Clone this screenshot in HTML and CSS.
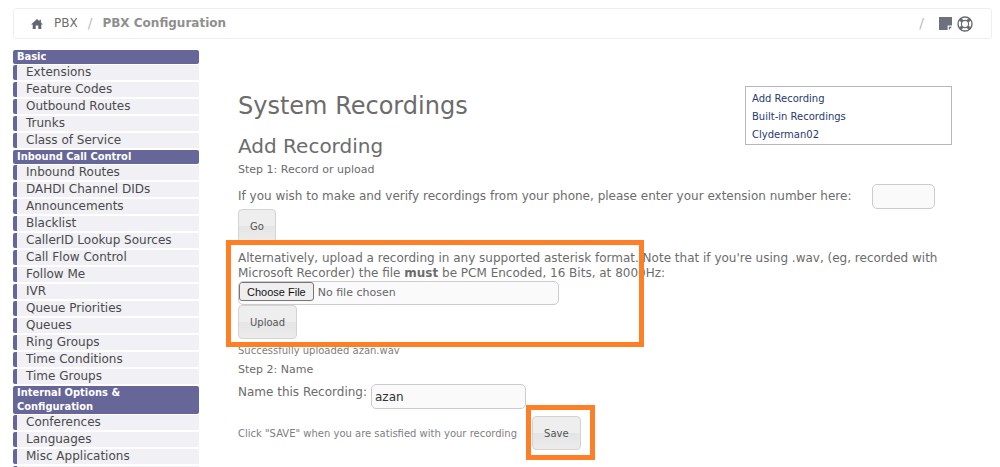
FILE: index.html
```html
<!DOCTYPE html>
<html lang="en">

<head>
    <meta charset="UTF-8">
    <meta name="viewport" content="width=device-width, initial-scale=1.0">
    <title>PBX Configuration</title>
    <link rel="stylesheet" href="styles.css">
</head>

<body>
    <!-- Breadcrumb -->
    <header class="topbar">
        <a class="home" href="#" aria-label="Home">
            <svg width="12" height="10" viewBox="0 0 12 10" fill="#63666f">
                <path d="M6 0 0 5.4h1.7V10h3V6.6h2.6V10h3V5.4H12L9.9 3.5V.8H8.5v1.4z" />
            </svg>
        </a>
        <a href="#">PBX</a>
        <span class="slash">/</span>
        <strong>PBX Configuration</strong>
        <div class="tools">
            <span class="slash">/</span>
            <button type="button" aria-label="Notes">
                <svg width="13" height="13" viewBox="0 0 13 13" fill="#6d717d">
                    <path d="M0 0h13v8.5H8.6V13H0z" />
                    <path d="M9.8 9.8H13L9.8 13z" />
                </svg>
            </button>
            <button type="button" aria-label="Help">
                <svg width="16" height="16" viewBox="0 0 16 16" fill="none" stroke="#686b73">
                    <circle cx="8" cy="8" r="7" stroke-width="1.4" />
                    <circle cx="8" cy="8" r="3.6" stroke-width="1.2" />
                    <path d="m3 3 2.4 2.4M13 3l-2.4 2.4M3 13l2.4-2.4M13 13l-2.4-2.4" stroke-width="3" />
                </svg>
            </button>
        </div>
    </header>

    <div class="columns">
        <!-- Module menu -->
        <nav class="sidebar">
            <h3>Basic</h3>
            <ul>
                <li><a href="#">Extensions</a></li>
                <li><a href="#">Feature Codes</a></li>
                <li><a href="#">Outbound Routes</a></li>
                <li><a href="#">Trunks</a></li>
                <li><a href="#">Class of Service</a></li>
            </ul>
            <h3>Inbound Call Control</h3>
            <ul>
                <li><a href="#">Inbound Routes</a></li>
                <li><a href="#">DAHDI Channel DIDs</a></li>
                <li><a href="#">Announcements</a></li>
                <li><a href="#">Blacklist</a></li>
                <li><a href="#">CallerID Lookup Sources</a></li>
                <li><a href="#">Call Flow Control</a></li>
                <li><a href="#">Follow Me</a></li>
                <li><a href="#">IVR</a></li>
                <li><a href="#">Queue Priorities</a></li>
                <li><a href="#">Queues</a></li>
                <li><a href="#">Ring Groups</a></li>
                <li><a href="#">Time Conditions</a></li>
                <li><a href="#">Time Groups</a></li>
            </ul>
            <h3>Internal Options &amp;<br>Configuration</h3>
            <ul>
                <li><a href="#">Conferences</a></li>
                <li><a href="#">Languages</a></li>
                <li><a href="#">Misc Applications</a></li>
                <li></li>
            </ul>
        </nav>

        <main class="content">
            <div class="heading">
                <div>
                    <h1>System Recordings</h1>
                    <h2>Add Recording</h2>
                </div>
                <ul class="rnav">
                    <li><a href="#">Add Recording</a></li>
                    <li><a href="#">Built-in Recordings</a></li>
                    <li><a href="#">Clyderman02</a></li>
                </ul>
            </div>

            <form>
                <h5>Step 1: Record or upload</h5>
                <div class="phone">
                    <label for="extension">If you wish to make and verify recordings from your phone, please enter your extension number here:</label>
                    <input type="text" id="extension">
                </div>
                <button type="button" class="btn">Go</button>

                <div class="upload">
                    <label for="recording">Alternatively, upload a recording in any supported asterisk format. Note that if you're using .wav, (eg, recorded with Microsoft Recorder) the file <b>must</b> be PCM Encoded, 16 Bits, at 8000Hz:</label>
                    <input type="file" id="recording">
                    <button type="button" class="btn">Upload</button>
                    <span class="marker"></span>
                </div>

                <p class="status">Successfully uploaded azan.wav</p>
                <h5>Step 2: Name</h5>
                <div class="name">
                    <label for="rname">Name this Recording:</label>
                    <input type="text" id="rname" value="azan">
                </div>
                <div class="save">
                    <p>Click "SAVE" when you are satisfied with your recording</p>
                    <div class="save-button">
                        <button type="button" class="btn">Save</button>
                        <span class="marker"></span>
                    </div>
                </div>
            </form>
        </main>
    </div>
</body>

</html>
```
FILE: styles.css
```css
* {
    box-sizing: border-box;
}

body {
    margin: 0;
    padding: 8px 8px 0 13px;
    height: 100vh;
    overflow: hidden;
    background-color: #fff;
    font-family: Verdana, "DejaVu Sans", sans-serif;
    font-size: 12px;
    line-height: 15px;
    color: #6c6c6c;
}

a {
    color: inherit;
    text-decoration: none;
}

ul {
    list-style: none;
    margin: 0;
    padding: 0;
}

h1,
h2,
h3,
h5,
p {
    margin: 0;
    font-weight: normal;
}

svg {
    display: block;
}

/* Breadcrumb */
.topbar {
    display: flex;
    align-items: center;
    height: 31px;
    padding: 0 18px 0 17px;
    border: 1px solid #eee;
    border-radius: 3px;
}

.topbar strong {
    color: #8f8f8f;
}

.home {
    margin-right: 11px;
}

.slash {
    margin: 0 10px;
    font-size: 14px;
    color: #bbb;
}

.tools {
    display: flex;
    align-items: center;
    gap: 5px;
    margin-left: auto;
}

.tools button {
    padding: 0;
    border: 0;
    background: none;
    cursor: pointer;
}

.columns {
    display: flex;
    gap: 39px;
    margin-top: 11px;
}

/* Module menu */
.sidebar {
    flex: none;
    width: 186px;
}

.sidebar h3 {
    margin-bottom: 1px;
    padding: 0 4px;
    background-color: #666699;
    border-radius: 2px;
    color: #fff;
    font-family: "DejaVu Sans Condensed", "DejaVu Sans", sans-serif;
    font-size: 11px;
    font-weight: bold;
    line-height: 14px;
}

.sidebar li {
    height: 15px;
    margin-bottom: 2px;
    padding-left: 9px;
    background-color: #f0f0f5;
    border-left: 4px solid #666699;
    border-radius: 2px 0 0 2px;
    color: #4a4a4a;
}

/* Recording form */
.content {
    flex: 1;
    padding: 36px 40px 0 0;
}

.heading {
    display: flex;
    justify-content: space-between;
}

h1 {
    margin-top: 4px;
    font-size: 24px;
    line-height: 32px;
}

h2 {
    margin-top: 10px;
    font-size: 20px;
    line-height: 28px;
}

.rnav {
    width: 207px;
    height: 59px;
    padding: 3px 6px;
    border: 1px solid #b5b8ba;
    color: #1f3a70;
    font-size: 10px;
    line-height: 18px;
}

h5 {
    font-size: 11px;
    line-height: 20px;
}

input {
    border: 1px solid #ccc;
    border-radius: 5px;
    background-color: #fafafa;
    color: #333;
    font-family: inherit;
    font-size: 12px;
}

.phone {
    display: flex;
    align-items: center;
    gap: 21px;
    margin-top: 4px;
}

.phone label {
    white-space: nowrap;
}

.phone input {
    width: 63px;
    height: 25px;
}

.btn {
    display: block;
    height: 34px;
    padding: 0 11px;
    border: 1px solid #d3d3d3;
    border-radius: 4px;
    background: linear-gradient(#eee 50%, #e4e4e4 50%, #ececec);
    color: #555;
    font-family: inherit;
    font-size: 10px;
    cursor: pointer;
}

.upload {
    position: relative;
    margin-top: 8px;
}

.upload label {
    display: block;
}

.upload input {
    display: block;
    width: 321px;
    height: 24px;
    color: #666;
    font-size: 11px;
}

.upload input::file-selector-button {
    height: 19px;
    padding: 0 7px;
    border: 1px solid #767676;
    border-radius: 3px;
    background-color: #efefef;
    color: #111;
    font-family: "Liberation Sans", Arial, sans-serif;
    font-size: 11px;
}

/* Orange frames drawn over the form */
.marker {
    position: absolute;
    border: 5px solid #ff7f27;
    pointer-events: none;
}

.upload .marker {
    top: -11px;
    left: -12px;
    width: 418px;
    height: 107px;
}

.status {
    margin-top: 4px;
    font-size: 10px;
    color: #808080;
}

.status + h5 {
    margin-top: 2px;
}

.name {
    display: flex;
    align-items: flex-start;
    gap: 4px;
    margin-top: 4px;
}

.name label {
    line-height: 17px;
}

.name input {
    width: 155px;
    height: 25px;
    padding: 0 3px;
}

.save {
    display: flex;
    align-items: center;
    gap: 15px;
    margin-top: 7px;
    font-size: 10px;
    color: #808080;
}

.save-button {
    position: relative;
}

.save-button .marker {
    top: -11px;
    left: -6px;
    width: 69px;
    height: 55px;
}
```
